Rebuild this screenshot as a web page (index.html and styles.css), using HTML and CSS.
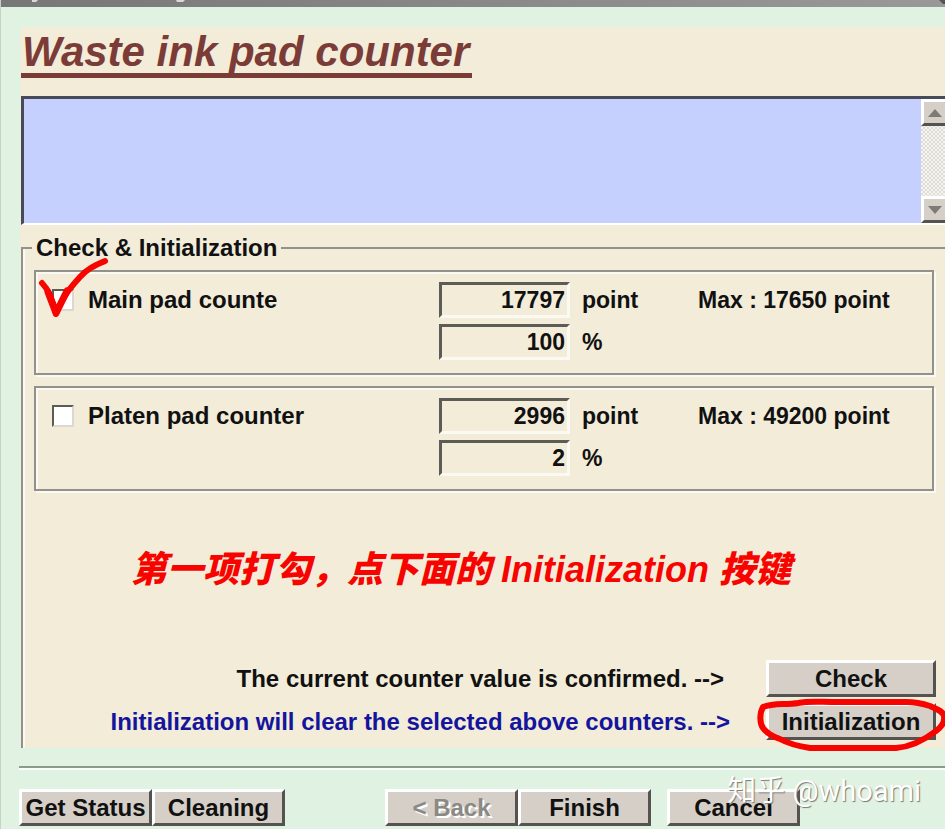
FILE: index.html
```html
<!DOCTYPE html>
<html lang="en">
<head>
    <meta charset="UTF-8">
    <meta name="viewport" content="width=device-width, initial-scale=1.0">
    <title>Waste ink pad counter</title>
    <link rel="stylesheet" href="styles.css">
</head>
<body>
    <div class="window">
        <div class="titlebar">
            <svg width="945" height="4" viewBox="0 0 945 4">
                <path d="M31 0h6l-2 2h-4zM175 0h9l-2 2h-6z" fill="#d8d8d8"/>
                <path d="M938 0h7v4h-3z" fill="#555"/>
            </svg>
        </div>

        <!-- Main page -->
        <div class="page">
            <h1>Waste ink pad counter</h1>

            <div class="message">
                <textarea class="message-text" aria-label="Message" readonly></textarea>
                <div class="scrollbar">
                    <button class="scroll-button" aria-label="Scroll up">
                        <svg width="14" height="8" viewBox="0 0 14 8"><path d="M0 8L7 0l7 8z" fill="#7d7b76"/></svg>
                    </button>
                    <button class="scroll-button" aria-label="Scroll down">
                        <svg width="14" height="8" viewBox="0 0 14 8"><path d="M0 0h14L7 8z" fill="#7d7b76"/></svg>
                    </button>
                </div>
            </div>

            <fieldset class="group">
                <legend>Check &amp; Initialization</legend>

                <div class="panel">
                    <div class="pad">
                        <input type="checkbox" id="mainPad">
                        <label for="mainPad">Main pad counte</label>
                        <svg class="tick" width="72" height="64" viewBox="0 0 72 64">
                            <path d="M6 27C12 33 17 45 20 58C27 40 34 32 44 21C52 12 60 9 69 5" fill="none" stroke="#f80400" stroke-width="6" stroke-linecap="round" stroke-linejoin="round"/>
                            <path d="M12 36L20 57L31 35" fill="none" stroke="#f80400" stroke-width="7" stroke-linecap="round" stroke-linejoin="round"/>
                        </svg>
                    </div>
                    <input type="text" class="value" id="mainPoint" value="17797" readonly>
                    <label class="unit" for="mainPoint">point</label>
                    <span class="max">Max : 17650 point</span>
                    <input type="text" class="value percent" id="mainPercent" value="100" readonly>
                    <label class="unit" for="mainPercent">%</label>
                </div>

                <div class="panel">
                    <div class="pad">
                        <input type="checkbox" id="platenPad">
                        <label for="platenPad">Platen pad counter</label>
                    </div>
                    <input type="text" class="value" id="platenPoint" value="2996" readonly>
                    <label class="unit" for="platenPoint">point</label>
                    <span class="max">Max : 49200 point</span>
                    <input type="text" class="value percent" id="platenPercent" value="2" readonly>
                    <label class="unit" for="platenPercent">%</label>
                </div>

                <p class="note" lang="zh-CN">第一项打勾，点下面的 Initialization 按键</p>

                <div class="action">
                    <span class="confirm">The current counter value is confirmed. --&gt;</span>
                    <button class="wide">Check</button>
                </div>
                <div class="action">
                    <span class="clear">Initialization will clear the selected above counters. --&gt;</span>
                    <button class="wide">Initialization</button>
                    <svg class="ring" width="190" height="56" viewBox="0 0 190 56">
                        <path d="M6 9C16 5 28 7 41 5C52 3 62 4 75 4H149C160 4 167 6 173 8C180 11 186 13 187 18C188 25 184 29 179 33C166 43 152 49 139 50H53C40 48 32 46 23 41C14 38 9 34 6 30C3 26 2 16 6 9z" fill="none" stroke="#f80400" stroke-width="6" stroke-linejoin="round"/>
                    </svg>
                </div>
            </fieldset>
        </div>

        <!-- Bottom buttons -->
        <div class="footer">
            <button>Get Status</button>
            <button>Cleaning</button>
            <button class="back" disabled>&lt; Back</button>
            <button>Finish</button>
            <button class="cancel">Cancel</button>
        </div>
        <div class="watermark">知乎 @whoami</div>
    </div>
</body>
</html>
```

FILE: styles.css
```css
* {
    box-sizing: border-box;
}

body {
    margin: 0;
    background-color: #e0f2e1;
    color: #111;
    font-family: "Liberation Sans", Arial, sans-serif;
    font-size: 24px;
    font-weight: bold;
    line-height: 28px;
    overflow: hidden;
}

.window {
    position: relative;
    min-height: 100vh;
    border-left: 1px solid #c9cfc9;
}

.titlebar {
    height: 7px;
    background: linear-gradient(to right, #777, #999);
    overflow: hidden;
}

.titlebar svg {
    display: block;
}

/* Page area */
.page {
    margin: 20px 0 0 19px;
    background-color: #f2ecd9;
}

h1 {
    width: fit-content;
    margin: 0 0 18px 1px;
    padding: 4px 3px 0 1px;
    border-bottom: 5px solid #7b3c38;
    color: #7b3c38;
    font-size: 42px;
    font-style: italic;
    line-height: 42px;
    white-space: nowrap;
}

.message {
    display: flex;
    height: 129px;
    margin-left: 1px;
    border-top: 3px solid #474a58;
    border-left: 3px solid #474a58;
    border-bottom: 2px solid #fff;
}

.message-text {
    flex: 1;
    padding: 4px;
    border: none;
    outline: none;
    background-color: #c6d0ff;
    resize: none;
}

.scrollbar {
    display: flex;
    flex-direction: column;
    justify-content: space-between;
    width: 24px;
    background: repeating-conic-gradient(#dedcd6 0 25%, #f6f5f0 0 50%) 0 0 / 4px 4px;
}

/* Buttons */
button {
    width: 133px;
    height: 37px;
    padding: 0;
    border: 3px solid;
    border-color: #fff #55534f #55534f #fff;
    background-color: #d5cfc8;
    color: #111;
    font: inherit;
    white-space: nowrap;
}

button:disabled {
    color: #8b8984;
    text-shadow: 2px 2px 0 #fff;
}

.wide {
    width: 170px;
}

.scroll-button {
    display: flex;
    align-items: center;
    justify-content: center;
    width: 24px;
    height: 27px;
    border-right: none;
}

/* Counters */
.group {
    min-width: 0;
    margin: 9px 0 0 1px;
    padding: 8px 11px 8px;
    border: 2px solid #92918b;
    border-right: none;
    border-bottom: none;
    box-shadow: inset 2px 0 0 #fbfaf2;
}

legend {
    margin-left: -2px;
    padding: 0 4px;
}

.panel {
    display: grid;
    grid-template-columns: 1fr 131px 104px 234px;
    grid-auto-rows: 36px;
    gap: 6px 12px;
    align-items: center;
    height: 105px;
    margin-bottom: 11px;
    padding-top: 10px;
    border: 2px solid #92918b;
    box-shadow: 2px 2px 0 #fbfaf2, inset 2px 2px 0 #fbfaf2;
}

.pad {
    display: flex;
    position: relative;
    align-items: center;
    gap: 14px;
    padding-left: 16px;
    white-space: nowrap;
}

input[type="checkbox"] {
    appearance: none;
    width: 22px;
    height: 22px;
    margin: 0;
    border: 2px solid;
    border-color: #5d5b56 #dad8d0 #dad8d0 #5d5b56;
    background-color: #fff;
}

.tick {
    position: absolute;
    left: 0;
    top: -30px;
}

.value {
    width: 100%;
    height: 36px;
    padding: 1px 2px 0;
    border: 3px solid;
    border-color: #5d5b56 #fbfaf2 #fbfaf2 #5d5b56;
    outline: none;
    background-color: #f2ecd9;
    color: #111;
    font: inherit;
    font-size: 23px;
    text-align: right;
}

.percent {
    grid-column: 2;
}

.unit,
.max {
    font-size: 23px;
    white-space: nowrap;
}

.note {
    margin: 58px 0 69px 97px;
    color: #f80400;
    font-family: "Liberation Sans", "Noto Sans CJK SC", sans-serif;
    font-size: 36px;
    font-style: italic;
    font-weight: 900;
    line-height: 42px;
    white-space: nowrap;
}

.action {
    display: flex;
    position: relative;
    align-items: center;
    justify-content: flex-end;
    margin: 0 -2px 6px 0;
    white-space: nowrap;
}

.action:last-child {
    margin-bottom: 0;
}

.confirm {
    margin-right: 42px;
}

.clear {
    margin-right: 36px;
    color: #14149c;
}

.ring {
    position: absolute;
    right: -11px;
    top: -5px;
}

/* Footer */
.footer {
    display: flex;
    margin: 18px 0 0 18px;
    padding: 21px 145px 4px 0;
    border-top: 2px solid #8b9a8d;
    box-shadow: inset 0 2px 0 #f8fff8;
}

.back {
    margin-left: auto;
}

.cancel {
    margin-left: 16px;
}

.watermark {
    position: absolute;
    right: 24px;
    bottom: 22px;
    color: #fff;
    font-family: Roboto, "Noto Sans CJK SC", sans-serif;
    font-size: 29px;
    font-weight: normal;
    line-height: 34px;
    text-shadow: 1px 1px 1px #777;
}
```
